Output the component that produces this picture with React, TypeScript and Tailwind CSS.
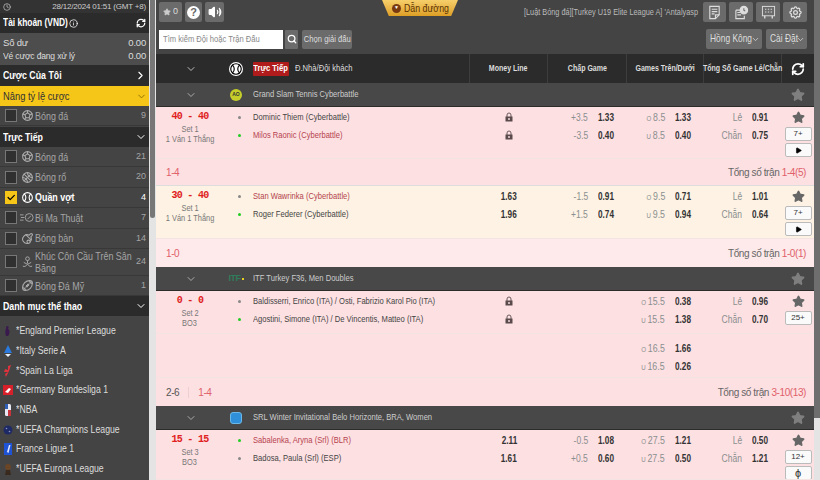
import { ChevronDown, ChevronRight, Play, Star, Volume2, Search, RefreshCw, Info, Clock } from "lucide-react";
import { TbBallAmericanFootball, TbBallBasketball, TbBallFootball, TbBallTennis, TbCheck, TbPingPong, TbSettings } from "react-icons/tb";
import type { ReactNode } from "react";

interface Side {
  name: string;
  serving?: boolean;
  red?: boolean;
  hdp?: string;
  hdpOdds?: string;
  ou?: string;
  ouOdds?: string;
  oe?: string;
  oeOdds?: string;
  money?: string;
  lock?: boolean;
}

// the reference text is squeezed sideways, so these narrow it the same way
function Sq({ children, className = "origin-left" }: { children: ReactNode; className?: string }) {
  return <span className={`inline-block scale-x-[0.8] whitespace-nowrap ${className}`}>{children}</span>;
}

function Odds({ value }: { value: string }) {
  return (
    <span className="ml-[10px] w-[15px] whitespace-nowrap font-bold text-[#333]">
      <span className="inline-block origin-left scale-x-[0.82]">{value}</span>
    </span>
  );
}

function BilliardIcon() {
  return (
    <svg viewBox="0 0 16 12" className="h-[11px] w-[15px]" fill="none" stroke="currentColor" strokeWidth="1">
      <circle cx="10.5" cy="6" r="4.5" />
      <path d="M0 3h4M1 6h4M0 9h4M8.5 8l4-4" />
    </svg>
  );
}

function HockeyIcon() {
  return (
    <svg viewBox="0 0 14 14" className="h-[13px] w-[13px]" fill="none" stroke="currentColor" strokeWidth="1">
      <circle cx="7" cy="4" r="2" />
      <path d="M7 6v3M3 8l4 2 4-2M2 12c2 1 3 0 5-2 2 2 3 3 5 2" />
    </svg>
  );
}

function LockIcon() {
  return (
    <svg viewBox="0 0 8 10" className="h-[10px] w-[8px]">
      <path d="M2 5V3a2 2 0 0 1 4 0v2" fill="none" stroke="#6b5a5c" strokeWidth="1" />
      <rect x="0.5" y="4.5" width="7" height="5" fill="#5a4a4c" />
      <rect x="3" y="6" width="2" height="2" fill="#c9b5b7" />
    </svg>
  );
}

function DocIcon() {
  return (
    <svg viewBox="0 0 16 16" className="h-[15px] w-[15px]" fill="none" stroke="#ddd" strokeWidth="1.2">
      <path d="M3 1.5h10v9l-4 4H3z" />
      <path d="M5 4.5h6M5 7h6M5 9.5h3M13 10.5H9v4" />
    </svg>
  );
}

function ClockDocIcon() {
  return (
    <svg viewBox="0 0 16 16" className="h-[15px] w-[15px]" fill="none" stroke="#ddd" strokeWidth="1.2">
      <path d="M2 5.5h6M2 5.5v9h9v-3M3.5 8h3M3.5 10.5h4" />
      <circle cx="10.5" cy="5.5" r="4" fill="#ddd" />
      <path d="M10.5 3.5v2l1.5 1" stroke="#6b6b6b" />
    </svg>
  );
}

function BoardIcon() {
  return (
    <svg viewBox="0 0 16 16" className="h-[15px] w-[15px]" fill="none" stroke="#ddd" strokeWidth="1">
      <rect x="1.5" y="1.5" width="13" height="10" />
      <path d="M4 11.5v3M12 11.5v3M5 4v1M8 4v1M11 4v1M5 7v1M8 7v1M11 7v1" strokeWidth="1.4" />
    </svg>
  );
}

function SportRow({ icon, label, count, checked, tall }: { icon: ReactNode; label: ReactNode; count: number; checked?: boolean; tall?: boolean }) {
  return (
    <div className={`flex items-center border-b border-[#383838] pl-[5px] pr-[3px] ${tall ? "h-[27px]" : "h-[20.4px]"} ${checked ? "text-white" : "text-[#a5a5a5]"}`}>
      <span className={`flex h-[13px] w-[12px] shrink-0 items-center justify-center border ${checked ? "border-[#f5c518] bg-[#f5c518]" : "border-[#777] bg-[#303030]"}`}>
        {checked && <TbCheck className="h-[11px] w-[11px] text-black" strokeWidth={3} />}
      </span>
      <span className="ml-[3px] flex w-[14px] shrink-0 justify-center text-[#aaa]">{icon}</span>
      <span className={`ml-[1px] w-0 min-w-0 flex-1 text-[10.5px] leading-[12px] ${checked ? "font-bold" : ""}`}>
        <span className="inline-block origin-left scale-x-[0.85] whitespace-nowrap">{label}</span>
      </span>
      <span className="shrink-0 text-[9px]">{count}</span>
    </div>
  );
}

function SideHead({ label }: { label: string }) {
  return (
    <div className="flex h-[20px] items-center justify-between bg-[#2b2b2b] pl-[3px] pr-[2px] text-[11px] font-bold text-white">
      <Sq>{label}</Sq>
      <ChevronDown className="h-[12px] w-[12px]" />
    </div>
  );
}

function LeagueLogo({ kind }: { kind: number }) {
  const logos = [
    <path key="0" d="M4 1c2 0 2 2 1 3 2 1 2 4 0 7H3C2 8 2 5 3 4 3 3 3 1 4 1z" fill="#3a1a4e" />,
    <g key="1"><path d="M5 0l4 8H1z" fill="#2a7ae0" /><path d="M2 9h6l-3 3z" fill="#e8eefc" /></g>,
    <path key="2" d="M5 1l3-1-2 6-3 6-1-3 3-2H1l1-3 3 1z" fill="#e0323c" />,
    <g key="3"><rect x="0" y="1" width="10" height="10" fill="#d8202a" /><path d="M2 8l4-4 2 1-3 4z" fill="#fff" /></g>,
    <g key="4"><rect x="2" y="0" width="6" height="12" rx="1.5" fill="#e8e8f4" /><rect x="2" y="0" width="3" height="5" fill="#2f5fb5" /><rect x="5" y="6" width="3" height="6" fill="#c8343c" /></g>,
    <g key="5"><circle cx="5" cy="6" r="4.5" fill="#1e2a66" /><circle cx="3.5" cy="4.5" r="0.8" fill="#8a93c0" /><circle cx="6.5" cy="7.5" r="0.8" fill="#8a93c0" /></g>,
    <g key="6"><rect x="1" y="0" width="8" height="12" fill="#1f53d6" /><path d="M4 9l2-7h1.5l-2 8z" fill="#dfe8ff" /></g>,
    <g key="7"><circle cx="5" cy="4" r="3" fill="#6a4526" /><path d="M3 7h4l1 5H2z" fill="#3a2a1e" /></g>,
  ];
  return (
    <svg viewBox="0 0 10 12" className="h-[12px] w-[10px] shrink-0">{logos[kind]}</svg>
  );
}

function Sidebar() {
  const leagues = ["*England Premier League", "*Italy Serie A", "*Spain La Liga", "*Germany Bundesliga 1", "*NBA", "*UEFA Champions League", "France Ligue 1", "*UEFA Europa League"];
  return (
    <div className="flex w-[149px] shrink-0 flex-col bg-[#444] text-white">
      <div className="flex h-[13px] items-center justify-between bg-[#333] pl-[3px] pr-[3px] text-[8px] tracking-[-0.2px] text-[#ccc]">
        <Clock className="h-[8px] w-[8px]" />
        28/12/2024 01:51 (GMT +8)
      </div>
      <div className="flex h-[20px] items-center justify-between bg-[#2b2b2b] pl-[3px] pr-[3px] text-[10.5px] font-bold">
        <span className="flex items-center">
          <span className="w-[66px] whitespace-nowrap"><Sq>Tài khoản (VND)</Sq></span>
          <Info className="h-[9px] w-[9px]" />
        </span>
        <RefreshCw className="h-[10px] w-[10px]" strokeWidth={3} />
      </div>
      <div className="flex h-[32px] flex-col justify-center gap-[0px] bg-[#4d4d4d] pl-[3px] pr-[3px] text-[9.5px] leading-[13px] tracking-[-0.2px] text-[#ddd]">
        <div className="flex justify-between"><span>Số dư</span><span>0.00</span></div>
        <div className="flex justify-between"><Sq className="origin-left scale-x-[0.9]">Vé cược đang xử lý</Sq><span>0.00</span></div>
      </div>
      <div className="flex h-[21px] items-center justify-between bg-[#2b2b2b] pl-[3px] pr-[2px] text-[11px] font-bold">
        <Sq>Cược Của Tôi</Sq> <ChevronRight className="h-[13px] w-[13px]" />
      </div>
      <div className="flex h-[20px] items-center justify-between bg-[#f5c518] pl-[3px] pr-[2px] text-[11px] text-[#333]">
        <span className="inline-block origin-left scale-x-[0.85] whitespace-nowrap">Nâng tỷ lệ cược</span>
        <ChevronDown className="h-[11px] w-[11px] text-[#8a6d00]" />
      </div>
      <div className="h-[21px]">
        <SportRow icon={<TbBallFootball className="h-[13px] w-[13px]" />} label="Bóng đá" count={9} />
      </div>
      <SideHead label="Trực Tiếp" />
      <SportRow icon={<TbBallFootball className="h-[13px] w-[13px]" />} label="Bóng đá" count={21} />
      <SportRow icon={<TbBallBasketball className="h-[13px] w-[13px]" />} label="Bóng rổ" count={20} />
      <SportRow icon={<TbBallTennis className="h-[13px] w-[13px] text-white" />} label="Quần vợt" count={4} checked />
      <SportRow icon={<BilliardIcon />} label="Bi Ma Thuật" count={7} />
      <SportRow icon={<TbPingPong className="h-[13px] w-[13px]" />} label="Bóng bàn" count={14} />
      <SportRow icon={<HockeyIcon />} label={<>Khúc Côn Cầu Trên Sân<br />Băng</>} count={24} tall />
      <SportRow icon={<TbBallAmericanFootball className="h-[13px] w-[13px]" />} label="Bóng Đá Mỹ" count={1} />
      <SideHead label="Danh mục thể thao" />
      <div className="flex flex-col pt-[5px]">
        {leagues.map((league, i) => (
          <div key={league} className="flex h-[19.7px] items-center pl-[3px] text-[10.5px] text-[#ddd]">
            <LeagueLogo kind={i} />
            <span className="ml-[3px]"><Sq className="origin-left scale-x-[0.83]">{league}</Sq></span>
          </div>
        ))}
      </div>
    </div>
  );
}

function Toolbar() {
  return (
    <div className="relative h-[54px] bg-[#444] text-[#ddd]">
      <div className="flex h-[29px] items-start pl-[3px] pr-[7px] pt-[2px]">
        <div className="flex h-[20px] w-[23px] items-center justify-center gap-[2px] rounded-[2px] bg-[#6b6b6b] text-[9px]">
          <Star className="h-[8px] w-[8px] fill-[#ccc] text-[#ccc]" /> 0
        </div>
        <div className="ml-[3px] flex h-[20px] w-[17px] items-center justify-center rounded-[2px] bg-[#6b6b6b]">
          <span className="flex h-[13px] w-[13px] items-center justify-center rounded-full bg-white text-[11px] font-bold text-[#666]">?</span>
        </div>
        <div className="ml-[3px] flex h-[20px] w-[19px] items-center justify-center rounded-[2px] bg-[#6b6b6b]">
          <Volume2 className="h-[14px] w-[14px] fill-white text-white" />
        </div>
        <div className="ml-auto mt-[3px] w-[174px] text-[9.5px] text-[#bbb]">
          <span className="inline-block origin-left scale-x-[0.77] whitespace-nowrap">[Luật Bóng đá][Turkey U19 Elite League A] 'Antalyasp</span>
        </div>
        <div className="ml-[5px] flex gap-[3px]">
          <div className="flex h-[20px] w-[23px] items-center justify-center rounded-[2px] bg-[#6b6b6b]"><DocIcon /></div>
          <div className="flex h-[20px] w-[24px] items-center justify-center rounded-[2px] bg-[#6b6b6b]"><ClockDocIcon /></div>
          <div className="flex h-[20px] w-[24px] items-center justify-center rounded-[2px] bg-[#6b6b6b]"><BoardIcon /></div>
          <div className="flex h-[20px] w-[24px] items-center justify-center rounded-[2px] bg-[#6b6b6b] text-[15px] text-[#ddd]"><TbSettings /></div>
        </div>
      </div>
      <div className="flex h-[20px] items-center pl-[3px] pr-[7px] text-[9.5px]">
        <div className="flex h-[19px] w-[124px] items-center bg-white pl-[4px] text-[#888]"><Sq>Tìm kiếm Đội hoặc Trận Đấu</Sq></div>
        <div className="ml-[2px] flex h-[19px] w-[13px] items-center justify-center rounded-[1px] bg-[#6b6b6b]">
          <Search className="h-[10px] w-[10px] text-white" strokeWidth={3} />
        </div>
        <div className="ml-[4px] flex h-[19px] w-[50px] items-center justify-center rounded-[2px] bg-[#6b6b6b]"><Sq className="origin-center">Chọn giải đấu</Sq></div>
        <div className="ml-auto flex h-[20px] w-[56px] items-center rounded-[2px] bg-[#6b6b6b] pl-[4px] text-[10.5px]">
          <span className="w-[41px]"><Sq>Hồng Kông</Sq></span>
          <ChevronDown className="h-[9px] w-[9px]" />
        </div>
        <div className="ml-[4px] flex h-[20px] w-[41px] items-center rounded-[2px] bg-[#6b6b6b] pl-[4px] text-[10.5px]">
          <span className="w-[26px]"><Sq>Cài Đặt</Sq></span>
          <ChevronDown className="h-[9px] w-[9px]" />
        </div>
      </div>
      <div className="absolute left-[226px] top-0 flex h-[16px] w-[76px] items-center justify-center gap-[3px] bg-gradient-to-b from-[#f6cf6a] to-[#dd9f22] text-[11px] text-[#5a3200] [clip-path:polygon(0_0,100%_0,91%_100%,9%_100%)]">
        <span className="flex h-[9px] w-[9px] shrink-0 items-center justify-center rounded-full bg-[#7a3a10] text-[5px] text-[#fff]">▼</span>
        <span className="w-[44px]"><Sq>Dẫn đường</Sq></span>
      </div>
    </div>
  );
}

const COLS = "grid grid-cols-[97px_217px_78px_79px_77px_78px_32px]";

function TableHead() {
  return (
    <div className={`${COLS} h-[29px] items-center bg-[#2b2b2b] text-[9.5px] font-bold text-[#ddd]`}>
      <div className="flex items-center">
        <span className="flex w-[70px] justify-center"><ChevronDown className="h-[12px] w-[12px] text-[#bbb]" /></span>
        <span className="ml-[3px] flex h-[14px] w-[14px] items-center justify-center rounded-full bg-white text-black"><TbBallTennis className="h-[14px] w-[14px]" /></span>
      </div>
      <div className="flex h-full items-center border-r border-[#3d3d3d] font-normal">
        <span className="flex h-[14px] w-[36px] items-center justify-center rounded-[1px] bg-[#b01c1c] font-bold text-white"><Sq className="origin-center">Trực Tiếp</Sq></span>
        <span className="ml-[6px]"><Sq>Đ.Nhà/Đội khách</Sq></span>
      </div>
      {["Money Line", "Chấp Game", "Games Trên/Dưới", "Tổng Số Game Lẻ/Chẵn"].map((title) => (
        <div key={title} className="flex h-full items-center justify-center border-r border-[#3d3d3d]">
          <span className="inline-block scale-x-[0.74] whitespace-nowrap">{title}</span>
        </div>
      ))}
      <div className="flex items-center justify-center"><RefreshCw className="h-[14px] w-[14px] text-white" strokeWidth={3} /></div>
    </div>
  );
}

function LeagueRow({ name, logo }: { name: string; logo: ReactNode }) {
  return (
    <div className={`${COLS} h-[24px] items-center border-b border-[#2b2b2b] bg-[#484848] text-[9.5px] text-[#ccc]`}>
      <div className="flex items-center">
        <span className="flex w-[70px] justify-center"><ChevronDown className="h-[12px] w-[12px] text-[#aaa]" /></span>
        <span className="ml-[3px] flex w-[14px] justify-center">{logo}</span>
      </div>
      <div className="col-span-5"><Sq>{name}</Sq></div>
      <div className="flex justify-center"><Star className="h-[14px] w-[14px] fill-[#7f7f7f] text-[#7f7f7f]" /></div>
    </div>
  );
}

function MarketRows({ sides }: { sides: Side[] }) {
  return (
    <>
      <div className="flex flex-col">
        {sides.map((s) => (
          <div key={s.name} className="flex h-[18px] items-center justify-center text-[10px] font-bold text-[#333]">
            {s.lock && <LockIcon />}
            {s.money && <span className="inline-block scale-x-[0.82]">{s.money}</span>}
          </div>
        ))}
      </div>
      <div className="flex flex-col">
        {sides.map((s) => (
          <div key={s.name} className="flex h-[18px] items-center justify-end pr-[14px] text-[10px]">
            {s.hdp && <span className="inline-block origin-right scale-x-[0.85] text-[#8a8f8f]">{s.hdp}</span>}
            {s.hdpOdds && <Odds value={s.hdpOdds} />}
          </div>
        ))}
      </div>
      <div className="flex flex-col">
        {sides.map((s) => (
          <div key={s.name} className="flex h-[18px] items-center justify-end pr-[14px] text-[10px]">
            {s.ou && (
              <span className="inline-block origin-right scale-x-[0.88] text-[#8a8f8f]">
                <span className="mr-[2px] text-[7px]">{s.ou.slice(0, 1)}</span>
                {s.ou.slice(2)}
              </span>
            )}
            {s.ouOdds && <Odds value={s.ouOdds} />}
          </div>
        ))}
      </div>
      <div className="flex flex-col">
        {sides.map((s) => (
          <div key={s.name} className="flex h-[18px] items-center justify-end pr-[15px] text-[10px]">
            {s.oe && <span className="inline-block origin-right scale-x-[0.85] text-[#8a8f8f]">{s.oe}</span>}
            {s.oeOdds && <Odds value={s.oeOdds} />}
          </div>
        ))}
      </div>
    </>
  );
}

function SmallBtn({ children }: { children: ReactNode }) {
  return (
    <div className="flex h-[14px] w-[27px] shrink-0 items-center justify-center rounded-[2px] border border-[#bbb] bg-[#fafafa] text-[8px] text-[#333]">{children}</div>
  );
}

function Match(props: {
  score: string;
  sub: string;
  sub2: string;
  sides: Side[];
  extra?: Side[];
  count: string;
  play?: ReactNode;
  bg: string;
  height: string;
}) {
  const { score, sub, sub2, sides, extra, count, play, bg, height } = props;
  return (
    <>
      <div className={`${COLS} ${height} overflow-hidden border-b border-[#f3e3e3] pt-[1px] ${bg}`}>
        <div className="flex">
          <div className="flex w-[68px] flex-col items-center pt-[4px] text-[9.5px] leading-[10px] text-[#777]">
            <span className="mb-[2px] font-['Liberation_Mono',monospace] text-[10px] font-bold tracking-[-0.7px] text-[#e02020]">{score}</span>
            <span className="inline-block scale-x-[0.78] whitespace-nowrap">{sub}</span>
            <span className="inline-block scale-x-[0.78] whitespace-nowrap">{sub2}</span>
          </div>
          <div className="flex w-[29px] flex-col items-center pl-[1px]">
            {sides.map((s) => (
              <span key={s.name} className="flex h-[18px] items-center">
                <span className={`h-[3px] w-[3px] rounded-full ${s.serving ? "bg-[#22cc22]" : "bg-[#888]"}`} />
              </span>
            ))}
          </div>
        </div>
        <div className="flex flex-col">
          {sides.map((s) => (
            <div key={s.name} className={`flex h-[18px] items-center text-[9.5px] ${s.red ? "text-[#b5434f]" : "text-[#444]"}`}>
              <Sq>{s.name}</Sq>
            </div>
          ))}
        </div>
        <MarketRows sides={sides} />
        <div className="flex flex-col items-center pt-[3px]">
          <Star className="h-[13px] w-[13px] shrink-0 fill-[#666] text-[#666]" />
          <div className="mt-[3px] flex flex-col gap-[2px]">
            <SmallBtn>{count}</SmallBtn>
            {play}
          </div>
        </div>
      </div>
      {extra && (
        <div className={`${COLS} h-[44px] border-b border-[#f3e3e3] pt-[5px] ${bg}`}>
          <div className="col-span-2" />
          <MarketRows sides={extra} />
        </div>
      )}
    </>
  );
}

function Footer({ left, right, bg, height }: { left: ReactNode; right: string; bg: string; height: string }) {
  return (
    <div className={`flex items-center justify-between pl-[10px] pr-[8px] text-[10px] tracking-[-0.4px] ${height} ${bg}`}>
      <span className="flex items-center">{left}</span>
      <span className="text-[#666]">Tổng số trận <span className="text-[#e0606a]">{right}</span></span>
    </div>
  );
}

export default function App() {
  return (
    <div className="flex h-[480px] w-[820px] overflow-hidden bg-[#e4e4e4] font-['Liberation_Sans',Arial,sans-serif]">
      <Sidebar />
      <div className="flex w-[7px] shrink-0 flex-col">
        <div className="ml-[1px] h-[218px] w-[5px] rounded-b-[3px] bg-[#777]" />
      </div>
      <div className="flex w-[658px] shrink-0 flex-col">
        <Toolbar />
        <TableHead />
        <LeagueRow
          name="Grand Slam Tennis Cyberbattle"
          logo={<span className="flex h-[12px] w-[12px] items-center justify-center rounded-full bg-[#c6cf2a] text-[5px] font-bold text-[#333]">AO</span>}
        />
        <Match
          score="40 - 40"
          sub="Set 1"
          sub2="1 Ván 1 Thắng"
          bg="bg-[#fde0e2]"
          height="h-[52px]"
          count="7+"
          play={<SmallBtn><Play className="h-[7px] w-[7px] fill-black text-black" /></SmallBtn>}
          sides={[
            { name: "Dominic Thiem (Cyberbattle)", lock: true, hdp: "+3.5", hdpOdds: "1.33", ou: "O 8.5", ouOdds: "1.33", oe: "Lẻ", oeOdds: "0.91" },
            { name: "Milos Raonic (Cyberbattle)", serving: true, red: true, lock: true, hdp: "-3.5", hdpOdds: "0.40", ou: "U 8.5", ouOdds: "0.40", oe: "Chẵn", oeOdds: "0.75" },
          ]}
        />
        <Footer bg="bg-[#fde0e2]" height="h-[27px] border-b border-[#ddd]" left={<span className="text-[#e0606a]">1-4</span>} right="1-4(5)" />
        <Match
          score="30 - 40"
          sub="Set 1"
          sub2="1 Ván 1 Thắng"
          bg="bg-[#fdf2e3]"
          height="h-[53px]"
          count="7+"
          play={<SmallBtn><Play className="h-[7px] w-[7px] fill-black text-black" /></SmallBtn>}
          sides={[
            { name: "Stan Wawrinka (Cyberbattle)", red: true, money: "1.63", hdp: "-1.5", hdpOdds: "0.91", ou: "O 9.5", ouOdds: "0.71", oe: "Lẻ", oeOdds: "1.01" },
            { name: "Roger Federer (Cyberbattle)", serving: true, money: "1.96", hdp: "+1.5", hdpOdds: "0.74", ou: "U 9.5", ouOdds: "0.94", oe: "Chẵn", oeOdds: "0.64" },
          ]}
        />
        <Footer bg="bg-[#feeaea]" height="h-[28px]" left={<span className="text-[#e0606a]">1-0</span>} right="1-0(1)" />
        <LeagueRow
          name="ITF Turkey F36, Men Doubles"
          logo={<span className="flex items-center gap-[1px]"><span className="text-[9px] font-bold leading-none tracking-[-0.5px] text-[#2f7d5a]">ITF</span><span className="h-[2px] w-[2px] bg-[#e8d020]" /></span>}
        />
        <Match
          score="0 - 0"
          sub="Set 2"
          sub2="BO3"
          bg="bg-[#fde0e2]"
          height="h-[43px]"
          count="25+"
          sides={[
            { name: "Baldisserri, Enrico (ITA) / Osti, Fabrizio Karol Pio (ITA)", lock: true, ou: "O 15.5", ouOdds: "0.38", oe: "Lẻ", oeOdds: "0.96" },
            { name: "Agostini, Simone (ITA) / De Vincentis, Matteo (ITA)", serving: true, lock: true, ou: "U 15.5", ouOdds: "1.38", oe: "Chẵn", oeOdds: "0.70" },
          ]}
          extra={[
            { name: "a", ou: "O 16.5", ouOdds: "1.66" },
            { name: "b", ou: "U 16.5", ouOdds: "0.26" },
          ]}
        />
        <Footer
          bg="bg-[#fde0e2]"
          height="h-[28px]"
          left={<><span className="text-[#555]">2-6</span><span className="mx-[9px] h-[11px] w-px bg-[#eccfd0]" /><span className="text-[#e0606a]">1-4</span></>}
          right="3-10(13)"
        />
        <LeagueRow
          name="SRL Winter Invitational Belo Horizonte, BRA, Women"
          logo={<span className="h-[12px] w-[12px] rounded-[3px] border border-[#6bb8e8] bg-[#2f8fd8]" />}
        />
        <Match
          score="15 - 15"
          sub="Set 3"
          sub2="BO3"
          bg="bg-[#fde0e2]"
          height="h-[50px]"
          count="12+"
          play={<SmallBtn><span className="text-[11px] leading-none">ϕ</span></SmallBtn>}
          sides={[
            { name: "Sabalenka, Aryna (Srl) (BLR)", serving: true, red: true, money: "2.11", hdp: "-0.5", hdpOdds: "1.08", ou: "O 27.5", ouOdds: "1.21", oe: "Lẻ", oeOdds: "0.50" },
            { name: "Badosa, Paula (Srl) (ESP)", money: "1.61", hdp: "+0.5", hdpOdds: "0.60", ou: "U 27.5", ouOdds: "0.50", oe: "Chẵn", oeOdds: "1.21" },
          ]}
        />
      </div>
      <div className="flex w-[6px] shrink-0 flex-col">
        <div className="h-[418px] w-[6px] bg-[#6e6e6e]" />
      </div>
    </div>
  );
}
